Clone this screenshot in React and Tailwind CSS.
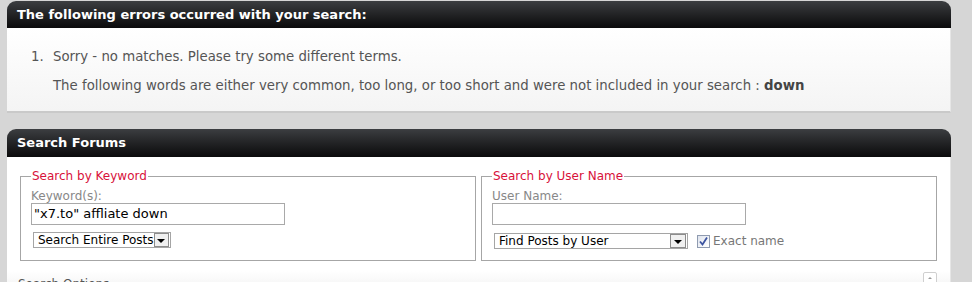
import React from "react";

function FakeSelect({ label, width }) {
  return (
    <div
      className={`flex items-center justify-between h-[16px] border border-[#a5a5a5] bg-white ${width}`}
    >
      <span className="pl-[4px] text-[12px] leading-none text-black whitespace-nowrap">{label}</span>
      <span className="flex items-center justify-center w-[16px] h-[14px] border border-[#8c8c8c] bg-[#f0f0f0] mr-px">
        <span className="w-0 h-0 border-l-[4px] border-r-[4px] border-t-[4px] border-l-transparent border-r-transparent border-t-black mt-[2px]" />
      </span>
    </div>
  );
}

function Panel({ title, children, headerClass }) {
  return (
    <div className="rounded-t-[9px] overflow-hidden">
      <div
        className={`flex items-center px-[10px] bg-gradient-to-b from-[#3c3e41] to-[#0b0b0c] text-white font-bold text-[13px] ${headerClass}`}
      >
        {title}
      </div>
      {children}
    </div>
  );
}

export default function App() {
  return (
    <div
      className="min-h-screen w-screen bg-[#d6d6d6] pt-px pl-[7px] pr-[21px] text-[#555]"
      style={{ fontFamily: "'DejaVu Sans', Verdana, sans-serif" }}
    >
      <Panel title="The following errors occurred with your search:" headerClass="h-[27px]">
        <div className="h-[85px] bg-gradient-to-b from-white to-[#f4f4f4] border-b-2 border-[#c9c9c9] border-r border-r-[#e6e6e6] pt-[19px] text-[13.3px]">
          <ol className="list-decimal pl-[41px] marker:text-[#555]">
            <li className="pl-[5px]">
              Sorry - no matches. Please try some different terms.
              <div className="mt-[9px]">
                The following words are either very common, too long, or too short and were not included in
                your search : <b className="text-[#444]">down</b>
              </div>
            </li>
          </ol>
        </div>
      </Panel>

      <div className="mt-[16px]">
        <Panel title="Search Forums" headerClass="h-[28px]">
          <div className="bg-white border-r border-r-[#e6e6e6]">
            <div className="grid grid-cols-2 gap-[5px] pl-[13px] pr-[13px] pt-[10px]">
              <fieldset className="border border-[#a6a6a6] pl-[10px] pb-[12px] h-[94px]">
                <legend className="px-px text-[12px] text-[#d8113a]">Search by Keyword</legend>
                <div className="text-[12px] text-[#888] leading-[14px] mt-[4px]">Keyword(s):</div>
                <div className="w-[254px] h-[22px] border border-[#a9a9a9] flex items-center pl-[2px] text-[13px] text-black">
                  "x7.to" affliate down
                </div>
                <div className="mt-[7px] ml-[2px]">
                  <FakeSelect label="Search Entire Posts" width="w-[138px]" />
                </div>
              </fieldset>
              <fieldset className="border border-[#a6a6a6] pl-[10px] pb-[12px] h-[94px]">
                <legend className="px-px text-[12px] text-[#d8113a]">Search by User Name</legend>
                <div className="text-[12px] text-[#888] leading-[14px] mt-[4px]">User Name:</div>
                <div className="w-[254px] h-[22px] border border-[#a9a9a9] bg-white" />
                <div className="mt-[7px] ml-[2px] flex items-center">
                  <FakeSelect label="Find Posts by User" width="w-[194px]" />
                  <span className="ml-[9px] flex items-center justify-center w-[13px] h-[13px] border border-[#8f9bb0] bg-gradient-to-br from-[#dfe4ee] to-white">
                    <svg width="11" height="11" viewBox="0 0 11 11">
                      <path d="M2 5.5 L4.5 8.5 L9 1.5" fill="none" stroke="#3c54a0" strokeWidth="1.8" />
                    </svg>
                  </span>
                  <span className="ml-[3px] text-[12px] text-[#777]">Exact name</span>
                </div>
              </fieldset>
            </div>
            <div className="mt-[10px] flex items-start justify-between pl-[11px] pr-[13px] bg-gradient-to-b from-white to-[#f2f2f2] h-[20px]">
              <span className="text-[12px] text-[#555] mt-[4px]">Search Options</span>
              <span className="flex items-center justify-center w-[14px] h-[12px] border border-[#cfcfcf] rounded-t-[2px] bg-white mt-px">
                <span className="w-0 h-0 border-l-[2px] border-r-[2px] border-b-[2px] border-l-transparent border-r-transparent border-b-[#999]" />
              </span>
            </div>
          </div>
        </Panel>
      </div>
    </div>
  );
}
